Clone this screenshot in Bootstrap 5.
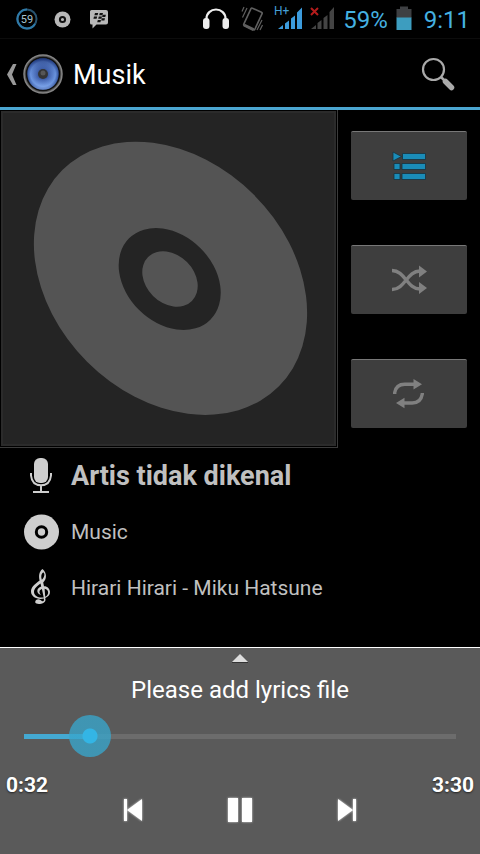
<!DOCTYPE html>
<html lang="id">
<head>
<meta charset="utf-8">
<meta name="viewport" content="width=device-width, initial-scale=1">
<title>Musik</title>
<link href="https://cdn.jsdelivr.net/npm/bootstrap@5.3.0/dist/css/bootstrap.min.css" rel="stylesheet">
<style>
body { background: #000; color: #fff; font-family: Roboto, "Noto Sans", sans-serif; }
svg { display: block; flex-shrink: 0; }
.status-bar { height: 39px; padding: 0 10px 0 16px; color: #45b1e0; font-size: 24px; line-height: 38px; border-bottom: 1px solid #0c0c0c; }
.status-bar span { padding-top: 2px; }
.app-bar { height: 71px; padding: 2px 22px 0 5px; border-bottom: 3px solid #4ba6d0; }
.app-title { font-size: 27px; line-height: 32px; font-weight: 400; padding-top: 2px; }
.album-art { flex: 0 1 338px; padding: 1px; border: solid #3b3b3b; border-width: 0 1px 1px 0; }
.album-art svg { width: 100%; height: auto; }
.side-modes { flex: 1 1 116px; padding: 21px 13px 0; gap: 45px; }
.mode-btn { height: 69px; background: #3e3e3e; border: 0; border-top: 1px solid #787878; border-radius: 2px; }
.mode-btn:hover { background: #484848; }
.track-info { padding: 0 24px; color: #c0c0c0; font-size: 21px; line-height: 28px; }
.track-info li { height: 56px; gap: 12px; }
.artist-name { font-size: 27px; line-height: 32px; font-weight: 700; }
.player-panel { background: #5a5a5a; border-top: 1px solid #fff; padding: 6px 3px 20px; }
.lyrics-note { font-size: 24px; line-height: 30px; margin-top: 12px; }
.seek { appearance: none; -webkit-appearance: none; width: 100%; height: 42px; margin-top: 10px;
  background: linear-gradient(to right, #44a9d2 var(--played), #6c6c6c var(--played)) center / calc(100% - 42px) 5px no-repeat; }
.seek::-webkit-slider-thumb { -webkit-appearance: none; width: 42px; height: 42px; border: 0; border-radius: 50%;
  background: radial-gradient(circle, #33b5e5 7px, rgba(56, 166, 204, .78) 8px); }
.seek::-moz-range-thumb { width: 42px; height: 42px; border: 0; border-radius: 50%;
  background: radial-gradient(circle, #33b5e5 7px, rgba(56, 166, 204, .78) 8px); }
.time-label { font-size: 21px; line-height: 26px; font-weight: 700; padding: 15px 3px 0; text-shadow: 0 1px 2px #222; }
.transport { padding-top: 29px; gap: 55px; }
.transport svg { filter: drop-shadow(0 0 1px #ddd); }
.transport .btn { width: 52px; height: 48px; }
</style>
<script src="https://cdn.jsdelivr.net/npm/bootstrap@5.3.0/dist/js/bootstrap.bundle.min.js"></script>
</head>
<body class="min-vh-100 d-flex flex-column">

<div class="status-bar d-flex align-items-center justify-content-between">
  <div class="d-flex align-items-center">
    <svg width="96" height="38" viewBox="16 0 96 38" role="img" aria-label="Notifikasi">
      <circle cx="27" cy="19" r="9.5" fill="none" stroke="#28536f" stroke-width="2"/>
      <path d="M27 9.500A9.500 9.500 0 1 0 35 24" fill="none" stroke="#2f7aa8" stroke-width="2"/>
      <text x="27" y="23" text-anchor="middle" font-size="11" fill="#a9c4d2" font-family="Roboto, sans-serif">59</text>
      <circle cx="62.500" cy="19.500" r="8" fill="#b8b8b8"/>
      <circle cx="62.500" cy="19.500" r="2.600" fill="#b8b8b8" stroke="#111" stroke-width="2"/>
      <path d="M91.500 10H106a2 2 0 0 1 2 2V22.500a2 2 0 0 1-2 2H96.500L92.500 28.500V24.500H91.500a1.500 1.500 0 0 1-1.500-1.500V11.500a1.500 1.500 0 0 1 1.500-1.500Z" fill="#b8b8b8"/>
      <path d="M95 13h3.200l-.6 2.200h-3.200zM99.800 13h3.200l-.6 2.200h-3.200zM94 16.500h3.200l-.6 2.200h-3.200zM98.800 16.500h3.200l-.6 2.200h-3.200zM102.700 14.800h3.200l-.6 2.200h-3.200zM101.800 18.200h3.200l-.6 2.200h-3.200zM97.800 20h3.200l-.6 2.200h-3.200z" fill="#111"/>
    </svg>
  </div>
  <div class="d-flex align-items-center">
    <svg width="142" height="38" viewBox="200 0 142 38" role="img" aria-label="Headset, getar, sinyal H+">
      <path d="M205.500 20V18.500a9.500 9 0 0 1 19 0V20" fill="none" stroke="#eee" stroke-width="2.200"/>
      <rect x="202" y="18" width="6.500" height="11" rx="3" fill="#eee"/>
      <rect x="221.500" y="18" width="6.500" height="11" rx="3" fill="#eee"/>
      <g fill="none" stroke="#606060">
        <path d="M251.500 8.200l9 4q1 .5.600 1.500l-7.200 15.500q-.5 1-1.500.6l-9-4.200q-1-.5-.6-1.500L250 8.700q.5-1 1.500-.5Z" stroke-width="1.600"/>
        <path d="M243 25l9.500 4.700" stroke-width="3"/>
        <path d="M246 8l-4.500 9.500M243 7l-2 4.500M261 20l-5 10M261.500 25l-2.500 5" stroke-width="1.200"/>
      </g>
      <text x="273" y="15" font-size="12" fill="#459fd6" font-family="Roboto, sans-serif">H+</text>
      <path d="M277 29l5-4v4zM284 23.500l4-3V29h-4zM290 18.500l4-3V29h-4zM296 12.500l5-5V29h-5z" fill="#3c9bdc"/>
      <path d="M310 29l5-4v4zM316.500 23l4-3v9h-4zM322.500 18l4-3v14h-4zM328.500 12l4.500-5v22h-4.500z" fill="#444"/>
      <path d="M310 8l7 7M317 8l-7 7" stroke="#b41c1c" stroke-width="2"/>
    </svg>
    <span>59%</span>
    <svg class="ms-2" width="16" height="38" viewBox="397 0 16 38" role="img" aria-label="Baterai 59%">
      <path d="M397.500 9h3.500V6.500h8V9h3.500v9h-15z" fill="#3e4043"/>
      <path d="M397.500 17.500h15V30h-15z" fill="#3d9dbf"/>
    </svg>
    <span class="ms-2 ps-1">9:11</span>
  </div>
</div>

<header class="app-bar d-flex align-items-center">
  <a href="#" class="d-flex align-items-center text-decoration-none" aria-label="Kembali">
    <svg width="60" height="42" viewBox="5 53 60 42">
      <defs>
        <radialGradient id="cone"><stop offset="0" stop-color="#1b2c54"/><stop offset=".4" stop-color="#4667b2"/><stop offset=".75" stop-color="#6b95df"/><stop offset="1" stop-color="#1d3c86"/></radialGradient>
        <linearGradient id="shade" x2="0" y2="1"><stop offset="0" stop-color="#162a69" stop-opacity=".75"/><stop offset=".6" stop-color="#5e88d8" stop-opacity="0"/><stop offset="1" stop-color="#a5c6ff" stop-opacity=".5"/></linearGradient>
      </defs>
      <path d="M13 64h3.500L12 74.500 16.500 85H13L7 74.500Z" fill="#999"/>
      <circle cx="43" cy="74" r="19" fill="#535353" stroke="#858585" stroke-width="1.500"/>
      <circle cx="43" cy="74" r="16.500" fill="url(#cone)" stroke="#111" stroke-width="1.500"/>
      <circle cx="43" cy="74" r="15.800" fill="url(#shade)"/>
      <circle cx="43" cy="74" r="5" fill="#343434"/><circle cx="43" cy="73" r="2.500" fill="#565656"/>
    </svg>
  </a>
  <h1 class="app-title m-0 ms-2 flex-grow-1">Musik</h1>
  <button type="button" class="btn p-0 border-0" aria-label="Cari">
    <svg width="40" height="40" viewBox="418 54 40 40">
      <circle cx="433.500" cy="69.500" r="10.500" fill="none" stroke="#aaa" stroke-width="2.200"/>
      <path d="M441 77l4 4" stroke="#aaa" stroke-width="2.500"/>
      <path d="M445.500 81.500l6 6" stroke="#aaa" stroke-width="5.500" stroke-linecap="round"/>
    </svg>
  </button>
</header>

<main>
  <section class="d-flex">
    <div class="album-art">
      <svg viewBox="0 110 335 335" role="img" aria-label="Sampul album">
        <rect x="0" y="110" width="335" height="335" fill="#2b2b2b"/>
        <rect x="2" y="112" width="331" height="331" fill="#242424"/>
        <g fill="#545454">
          <ellipse cx="169.500" cy="277.300" rx="153" ry="118" transform="rotate(45 169.500 277.300)"/>
          <ellipse cx="168.700" cy="278" rx="57.500" ry="43.600" transform="rotate(45 168.700 278)" fill="#242424"/>
          <ellipse cx="169" cy="278" rx="31" ry="24" transform="rotate(45 169 278)"/>
        </g>
      </svg>
    </div>
    <div class="side-modes d-flex flex-column">
      <button type="button" class="btn mode-btn d-flex align-items-center justify-content-center" aria-label="Daftar putar">
        <svg width="36" height="32" viewBox="391 150 36 32" fill="#1a8cb8" stroke="#16323d" stroke-width=".8">
          <path d="M393 152l8.500 4.500-8.500 4.500zM402.500 153.500H425.500v6H402.500zM394 163.500h6v6h-6zM402 163.500h23.500v6H402zM394 173.500h6v6h-6zM402 173.500h23.500v6H402z"/>
        </svg>
      </button>
      <button type="button" class="btn mode-btn d-flex align-items-center justify-content-center" aria-label="Acak">
        <svg width="36" height="32" viewBox="391 264 36 32">
          <path d="M392 270.500C405 270.500 407 289 420 289M392 289.500C405 289.500 407 271 420 271" fill="none" stroke="#808080" stroke-width="3.400"/>
          <path d="M419 265.500l8 6-8 6zM419 282l8 6-8 6z" fill="#808080"/>
        </svg>
      </button>
      <button type="button" class="btn mode-btn d-flex align-items-center justify-content-center" aria-label="Ulangi">
        <svg width="36" height="32" viewBox="391 378 36 32">
          <path d="M394.700 394v-1.500q1.500-8.300 10-8.300H415M422.300 393v1q-1.500 9-10 9H403" fill="none" stroke="#808080" stroke-width="3.400"/>
          <path d="M413.500 379l8.500 5.200-8.500 5.200zM404.500 397.800l-8.500 5.200 8.500 5.200z" fill="#808080"/>
        </svg>
      </button>
    </div>
  </section>

  <ul class="track-info list-unstyled m-0">
    <li class="d-flex align-items-center">
      <svg width="35" height="38" viewBox="24 456 35 38" aria-hidden="true">
        <rect x="34" y="457" width="14" height="25" rx="6" fill="#cecece"/>
        <path d="M31 472v2.500q1 9.800 10 9.800t10-9.800V472M41 484.500V491" fill="none" stroke="#cecece" stroke-width="2"/>
        <path d="M33 490h16v2H33z" fill="#cecece"/>
      </svg>
      <span class="artist-name">Artis tidak dikenal</span>
    </li>
    <li class="d-flex align-items-center">
      <svg width="35" height="36" viewBox="24 514 35 36" aria-hidden="true">
        <circle cx="41.500" cy="532" r="17.500" fill="#cecece"/>
        <circle cx="41.500" cy="532" r="5.200" fill="#cecece" stroke="#000" stroke-width="3"/>
      </svg>
      <span>Music</span>
    </li>
    <li class="d-flex align-items-center">
      <svg width="35" height="38" viewBox="24 568 35 38" aria-hidden="true">
        <path d="M42.500 568C38.800 571 38.600 576 39.600 580.500C34 585 31 588 31 592.500C31 597.500 35.500 600.500 40.500 600.500Q42.500 600.500 43.800 600C44.500 604 42.500 603.500 40.500 601.500C38.500 600 35 601 35.200 604C35.700 607 45 606.500 45.500 601.500L45.300 599.500C48.500 598 50 596 50 593C50 589.500 47.500 586.500 44 586.600L43.200 582.600C47 579 47 572 42.500 568ZM43.200 571.500C45.500 573 44.300 577.500 41.800 579.600C40.600 575.500 41.500 573 43.200 571.500ZM40.500 583.800L41.200 587C36.500 588.500 35.700 594.500 41 596.200C38.500 593.500 39.300 590.700 41.900 589.800L43.700 598.800C39 599.800 34 597.500 34 593C34 589.500 37 586.500 40.500 583.800ZM44.600 589.400C49 589.800 49.500 596.300 45.200 598Z" fill="#cecece" transform="translate(0 45.500) scale(1 .92)"/>
      </svg>
      <span>Hirari Hirari - Miku Hatsune</span>
    </li>
  </ul>
</main>

<footer class="player-panel mt-auto d-flex flex-column">
  <button type="button" class="btn p-0 border-0 align-self-center" aria-label="Buka lirik">
    <svg width="16" height="9" viewBox="0 0 16 9"><path d="M8 0l8 8H0z" fill="#ddd"/><path d="M0 8h16v1H0z" fill="#333"/></svg>
  </button>
  <p class="lyrics-note text-center mb-0">Please add lyrics file</p>
  <input class="seek" type="range" min="0" max="210" value="32" style="--played: 15.24%" aria-label="Posisi lagu">
  <div class="d-flex justify-content-between align-items-start">
    <span class="time-label">0:32</span>
    <div class="transport d-flex">
      <button type="button" class="btn p-0 border-0 d-flex align-items-center justify-content-center" aria-label="Sebelumnya">
        <svg width="20" height="24" viewBox="0 0 20 24" fill="#fff"><path d="M1 1h3v22H1zM19 1v22L4 12z"/></svg>
      </button>
      <button type="button" class="btn p-0 border-0 d-flex align-items-center justify-content-center" aria-label="Jeda">
        <svg width="26" height="26" viewBox="0 0 26 26" fill="#fff"><path d="M1 1h10v24H1zM15 1h10v24H15z"/></svg>
      </button>
      <button type="button" class="btn p-0 border-0 d-flex align-items-center justify-content-center" aria-label="Berikutnya">
        <svg width="20" height="24" viewBox="0 0 20 24" fill="#fff"><path d="M16 1h3v22h-3zM1 1v22l15-11z"/></svg>
      </button>
    </div>
    <span class="time-label">3:30</span>
  </div>
</footer>
</body>
</html>
